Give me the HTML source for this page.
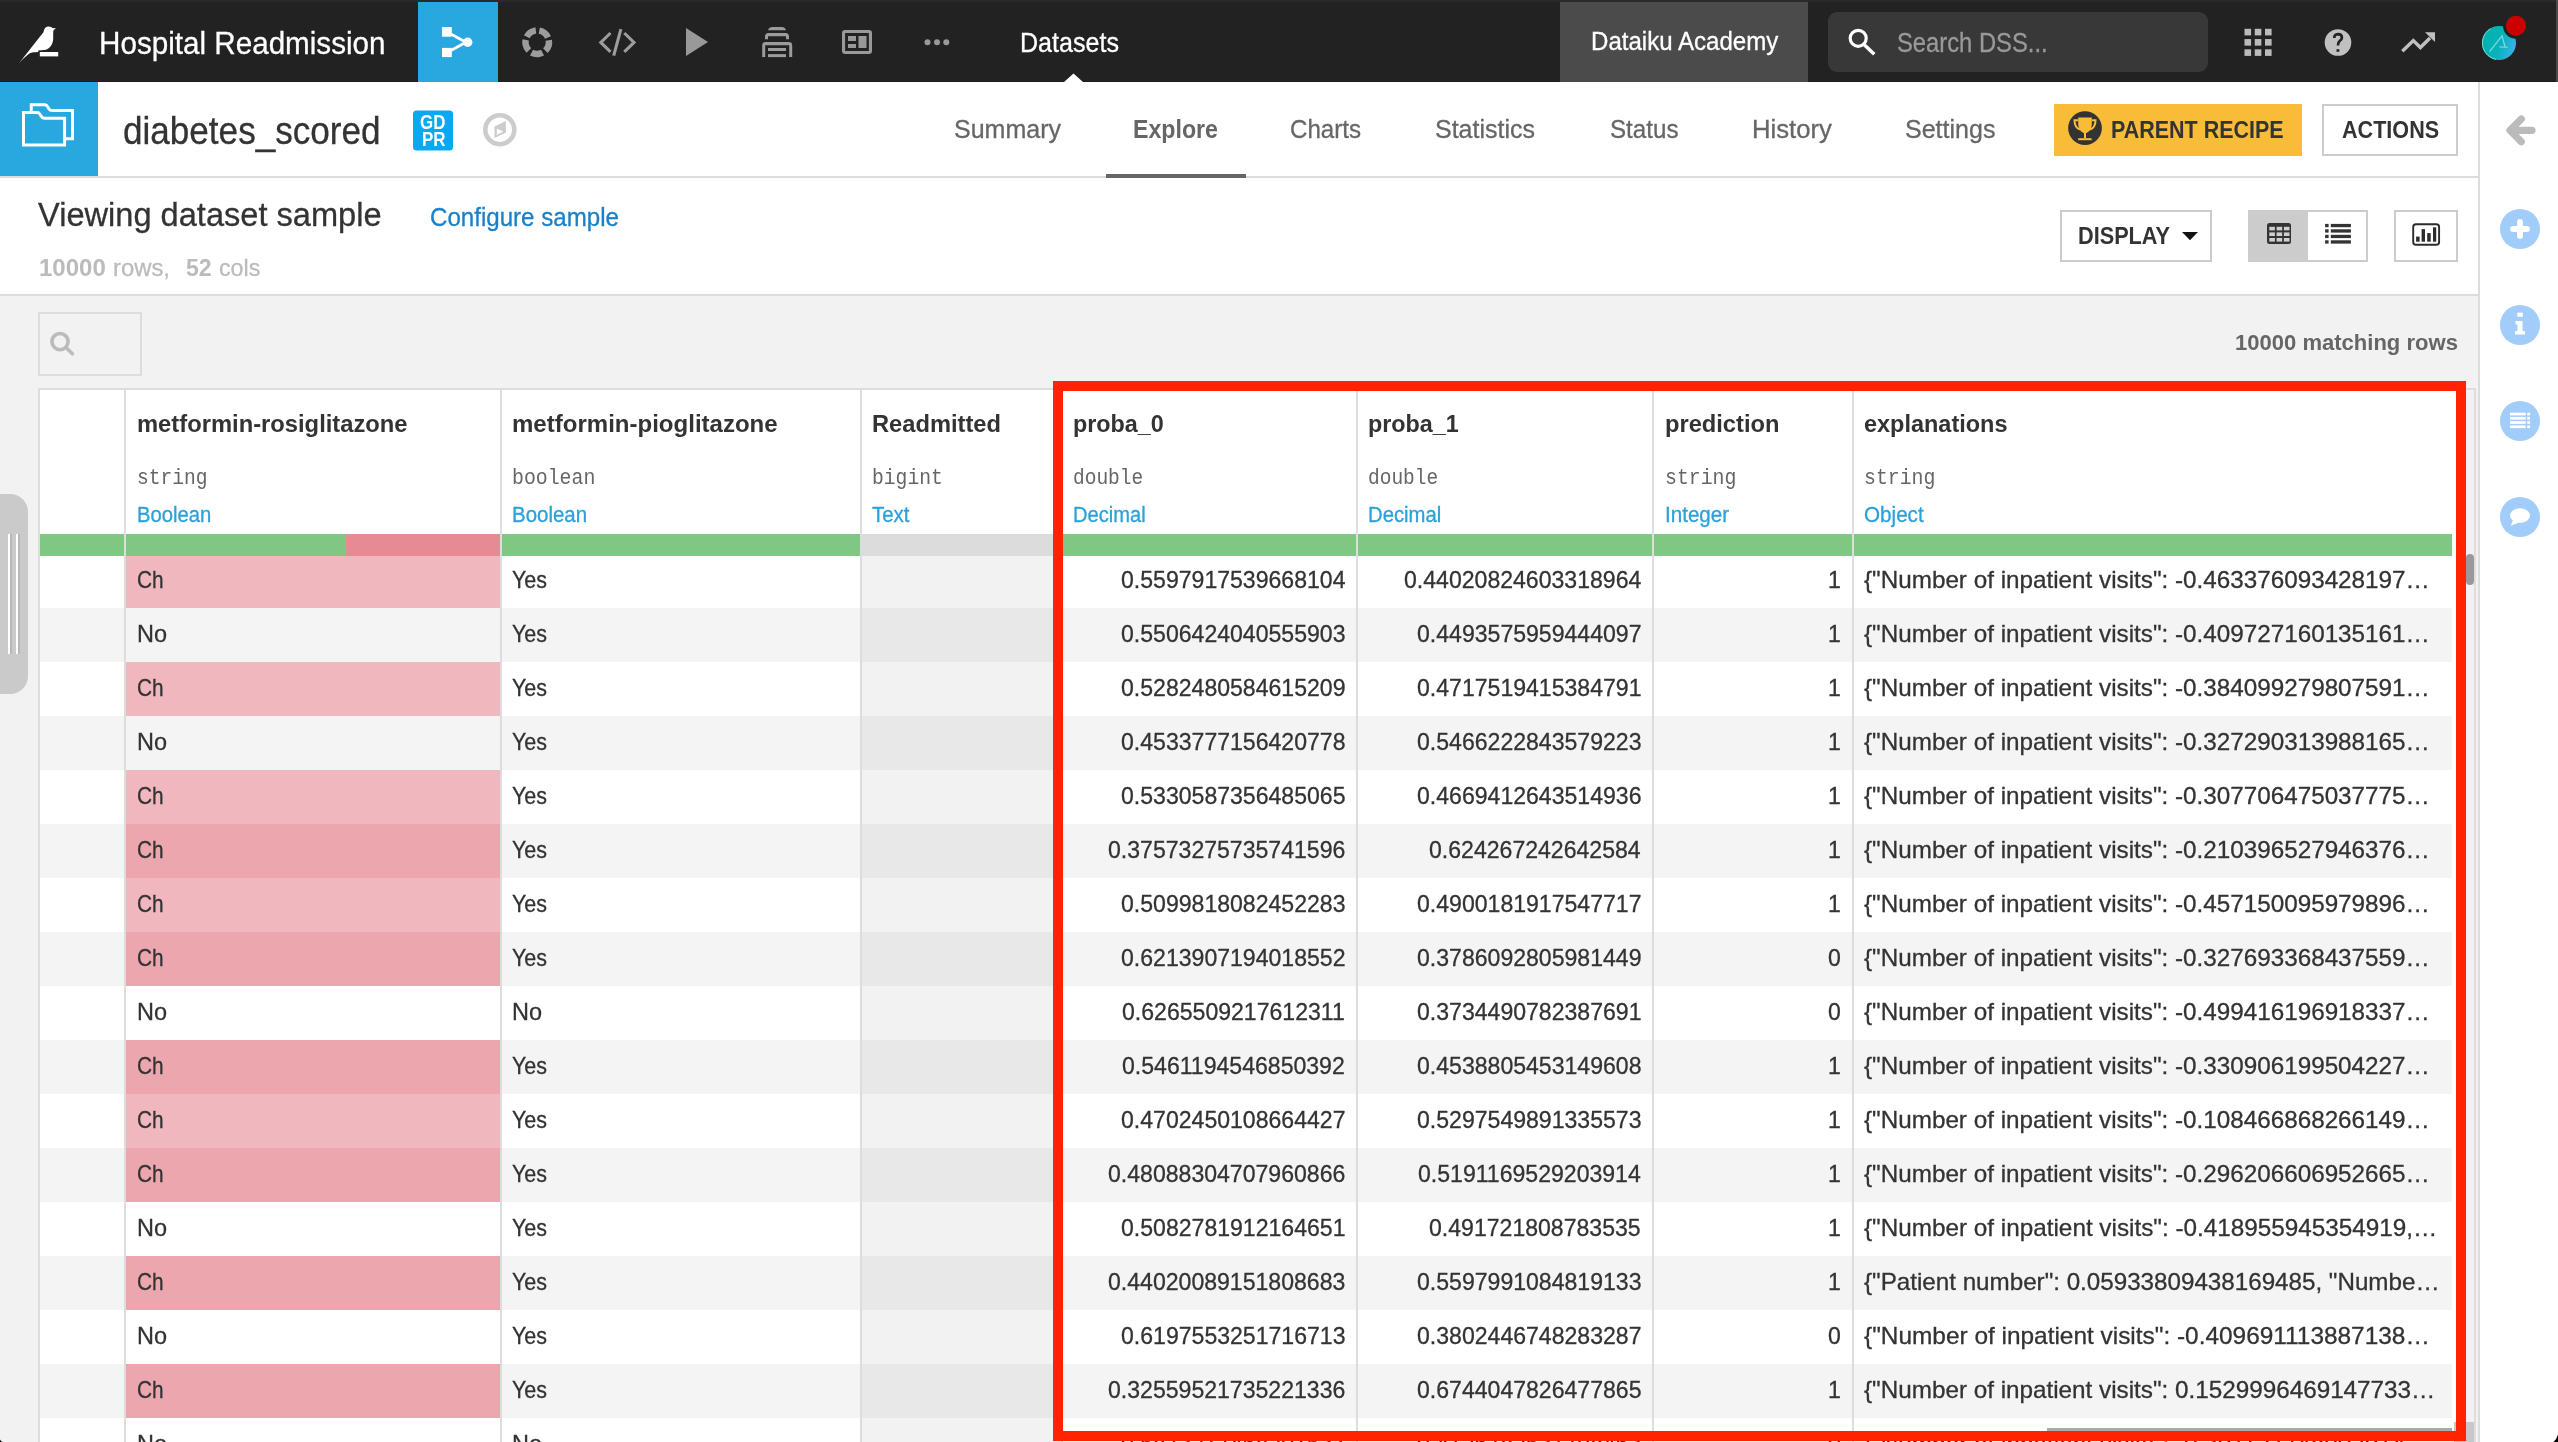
<!DOCTYPE html>
<html><head><meta charset="utf-8"><title>diabetes_scored - Explore</title>
<style>
html,body{margin:0;padding:0;}
body{width:2558px;height:1442px;overflow:hidden;position:relative;background:#fff;font-family:"Liberation Sans", sans-serif;}
#pg div{position:absolute;box-sizing:content-box;}
#pg .t{position:absolute;white-space:nowrap;}
#pg .r{-webkit-text-stroke:0.3px currentColor;}
#pg{position:absolute;left:0;top:0;width:2558px;height:1442px;will-change:transform;}
</style></head><body><div id="pg">
<div style="left:0px;top:0px;width:2558px;height:82px;background:#222;"></div>
<div style="left:0px;top:0px;width:2558px;height:2px;background:#2a2a2a;"></div>
<div style="left:0px;top:81px;width:2558px;height:1px;background:#1d1d1d;"></div>
<div style="left:2556px;top:0px;width:2px;height:82px;background:#4a4a4a;"></div>
<div style="left:418px;top:2px;width:80px;height:80px;background:#28a8de;"></div>
<div style="left:1560px;top:2px;width:248px;height:80px;background:#4b4b4b;"></div>
<div style="left:1828px;top:12px;width:380px;height:60px;background:#383838;border-radius:9px"></div>
<div style="left:0px;top:82px;width:2478px;height:94px;background:#fff;"></div>
<div style="left:0px;top:82px;width:98px;height:94px;background:#28a8de;"></div>
<div style="left:0px;top:176px;width:2478px;height:2px;background:#ddd;"></div>
<div style="left:1106px;top:174px;width:140px;height:4px;background:#666;"></div>
<div style="left:2480px;top:82px;width:78px;height:1360px;background:#fff;"></div>
<div style="left:2478px;top:82px;width:2px;height:1360px;background:#ddd;"></div>
<div style="left:0px;top:178px;width:2478px;height:116px;background:#fff;"></div>
<div style="left:0px;top:294px;width:2478px;height:2px;background:#ddd;"></div>
<div style="left:0px;top:296px;width:2478px;height:1146px;background:#f2f2f2;"></div>
<div style="left:2054px;top:104px;width:248px;height:52px;background:#f8bc38;"></div>
<div style="left:2322px;top:104px;width:132px;height:48px;border:2px solid #ccc;background:#fff"></div>
<div style="left:2060px;top:210px;width:148px;height:48px;border:2px solid #ccc;background:#fff"></div>
<div style="left:2248px;top:210px;width:116px;height:48px;border:2px solid #ccc;background:#fff"></div>
<div style="left:2248px;top:210px;width:60px;height:52px;background:#ccc;"></div>
<div style="left:2394px;top:210px;width:60px;height:48px;border:2px solid #ccc;background:#fff"></div>
<div style="left:38px;top:312px;width:100px;height:60px;border:2px solid #ddd;background:#f2f2f2"></div>
<div style="left:0px;top:494px;width:28px;height:200px;background:#cacaca;border-radius:0 18px 18px 0"></div>
<div style="left:8px;top:534px;width:2px;height:120px;background:#fff;"></div>
<div style="left:10px;top:534px;width:2px;height:120px;background:#b8b8b8;"></div>
<div style="left:16px;top:534px;width:2px;height:120px;background:#fff;"></div>
<div style="left:18px;top:534px;width:2px;height:120px;background:#b8b8b8;"></div>
<div style="left:38px;top:388px;width:2438px;height:1054px;background:#ddd;"></div>
<div style="left:40px;top:390px;width:2434px;height:1052px;background:#fff;"></div>
<div style="left:2458px;top:390px;width:16px;height:1052px;background:#f1f1f1;"></div>
<div style="left:2466px;top:554px;width:8px;height:31px;background:#999;border-radius:4px"></div>
<div style="left:40px;top:534px;width:84px;height:22px;background:#81c784;"></div>
<div style="left:126px;top:534px;width:374px;height:22px;background:#81c784;"></div>
<div style="left:502px;top:534px;width:358px;height:22px;background:#81c784;"></div>
<div style="left:862px;top:534px;width:199px;height:22px;background:#dcdcdc;"></div>
<div style="left:1063px;top:534px;width:293px;height:22px;background:#81c784;"></div>
<div style="left:1358px;top:534px;width:294px;height:22px;background:#81c784;"></div>
<div style="left:1654px;top:534px;width:198px;height:22px;background:#81c784;"></div>
<div style="left:1854px;top:534px;width:598px;height:22px;background:#81c784;"></div>
<div style="left:346px;top:534px;width:154px;height:22px;background:#e68a93;"></div>
<div style="left:40px;top:556px;width:2412px;height:52px;background:#fff;"></div>
<div style="left:862px;top:556px;width:199px;height:52px;background:#f2f2f2;"></div>
<div style="left:126px;top:556px;width:374px;height:52px;background:#f0b7bf;"></div>
<div style="left:40px;top:608px;width:2412px;height:54px;background:#f4f4f4;"></div>
<div style="left:862px;top:608px;width:199px;height:54px;background:#e8e8e8;"></div>
<div style="left:40px;top:662px;width:2412px;height:54px;background:#fff;"></div>
<div style="left:862px;top:662px;width:199px;height:54px;background:#f2f2f2;"></div>
<div style="left:126px;top:662px;width:374px;height:54px;background:#f0b7bf;"></div>
<div style="left:40px;top:716px;width:2412px;height:54px;background:#f4f4f4;"></div>
<div style="left:862px;top:716px;width:199px;height:54px;background:#e8e8e8;"></div>
<div style="left:40px;top:770px;width:2412px;height:54px;background:#fff;"></div>
<div style="left:862px;top:770px;width:199px;height:54px;background:#f2f2f2;"></div>
<div style="left:126px;top:770px;width:374px;height:54px;background:#f0b7bf;"></div>
<div style="left:40px;top:824px;width:2412px;height:54px;background:#f4f4f4;"></div>
<div style="left:862px;top:824px;width:199px;height:54px;background:#e8e8e8;"></div>
<div style="left:126px;top:824px;width:374px;height:54px;background:#eca6ae;"></div>
<div style="left:40px;top:878px;width:2412px;height:54px;background:#fff;"></div>
<div style="left:862px;top:878px;width:199px;height:54px;background:#f2f2f2;"></div>
<div style="left:126px;top:878px;width:374px;height:54px;background:#f0b7bf;"></div>
<div style="left:40px;top:932px;width:2412px;height:54px;background:#f4f4f4;"></div>
<div style="left:862px;top:932px;width:199px;height:54px;background:#e8e8e8;"></div>
<div style="left:126px;top:932px;width:374px;height:54px;background:#eca6ae;"></div>
<div style="left:40px;top:986px;width:2412px;height:54px;background:#fff;"></div>
<div style="left:862px;top:986px;width:199px;height:54px;background:#f2f2f2;"></div>
<div style="left:40px;top:1040px;width:2412px;height:54px;background:#f4f4f4;"></div>
<div style="left:862px;top:1040px;width:199px;height:54px;background:#e8e8e8;"></div>
<div style="left:126px;top:1040px;width:374px;height:54px;background:#eca6ae;"></div>
<div style="left:40px;top:1094px;width:2412px;height:54px;background:#fff;"></div>
<div style="left:862px;top:1094px;width:199px;height:54px;background:#f2f2f2;"></div>
<div style="left:126px;top:1094px;width:374px;height:54px;background:#f0b7bf;"></div>
<div style="left:40px;top:1148px;width:2412px;height:54px;background:#f4f4f4;"></div>
<div style="left:862px;top:1148px;width:199px;height:54px;background:#e8e8e8;"></div>
<div style="left:126px;top:1148px;width:374px;height:54px;background:#eca6ae;"></div>
<div style="left:40px;top:1202px;width:2412px;height:54px;background:#fff;"></div>
<div style="left:862px;top:1202px;width:199px;height:54px;background:#f2f2f2;"></div>
<div style="left:40px;top:1256px;width:2412px;height:54px;background:#f4f4f4;"></div>
<div style="left:862px;top:1256px;width:199px;height:54px;background:#e8e8e8;"></div>
<div style="left:126px;top:1256px;width:374px;height:54px;background:#eca6ae;"></div>
<div style="left:40px;top:1310px;width:2412px;height:54px;background:#fff;"></div>
<div style="left:862px;top:1310px;width:199px;height:54px;background:#f2f2f2;"></div>
<div style="left:40px;top:1364px;width:2412px;height:54px;background:#f4f4f4;"></div>
<div style="left:862px;top:1364px;width:199px;height:54px;background:#e8e8e8;"></div>
<div style="left:126px;top:1364px;width:374px;height:54px;background:#eca6ae;"></div>
<div style="left:40px;top:1418px;width:2412px;height:24px;background:#fff;"></div>
<div style="left:862px;top:1418px;width:199px;height:24px;background:#f2f2f2;"></div>
<div style="left:124px;top:390px;width:2px;height:1052px;background:#ddd;"></div>
<div style="left:500px;top:390px;width:2px;height:1052px;background:#ddd;"></div>
<div style="left:860px;top:390px;width:2px;height:1052px;background:#ddd;"></div>
<div style="left:1061px;top:390px;width:2px;height:1052px;background:#ddd;"></div>
<div style="left:1356px;top:390px;width:2px;height:1052px;background:#ddd;"></div>
<div style="left:1652px;top:390px;width:2px;height:1052px;background:#ddd;"></div>
<div style="left:1852px;top:390px;width:2px;height:1052px;background:#ddd;"></div>
<div style="left:2474px;top:390px;width:2px;height:1052px;background:#ddd;"></div>
<div style="left:2047px;top:1428px;width:405px;height:3px;background:#aaa;"></div>
<div style="left:2454px;top:1422px;width:20px;height:20px;background:#c8c8c8;"></div>
<svg style="position:absolute;left:0;top:0" width="2558" height="1442" viewBox="0 0 2558 1442"><path d="M18 64.4 L43.6 32.1 C43.8 28.5 46 26.4 48.5 26.4 C50.5 26.4 52 27.2 53 28.3 L55.9 28.1 L53.4 30.6 C53 33 53.3 36 53.2 39 C53 43 51.5 46 49 48 C47.5 49.3 46 49.8 44 50 L38.4 50.5 L38.1 51.9 C34 52.1 31.5 52.3 30.3 53.1 C26.5 55.5 21 61 18 64.4 Z" fill="#fff"/><rect x="39.8" y="52" width="18.4" height="4.4" fill="#fff"/><g fill="#fff"><rect x="442" y="27" width="9.8" height="9.7"/><rect x="442" y="47.9" width="9.8" height="9.2"/><circle cx="467.7" cy="42.2" r="4.7"/><path d="M449 33 L466 42.2 L449 51.5" fill="none" stroke="#fff" stroke-width="2.8"/></g><circle cx="537.2" cy="42.2" r="11.75" fill="none" stroke="#9c9c9c" stroke-width="6.5" stroke-dasharray="11.37 3.4" transform="rotate(-9.7 537.2 42.2)"/><g fill="none" stroke="#9c9c9c" stroke-width="3.1"><path d="M610.5 33 L600.8 42.4 L610.5 51.8"/><path d="M624.3 33 L634 42.4 L624.3 51.8"/><path d="M620.9 29.1 L613.7 55.6"/></g><path d="M686 28 L708 42 L686 56 Z" fill="#999"/><g fill="#9c9c9c"><path d="M768 30.3 Q769 27 772.5 27 L781.5 27 Q785 27 786 30.3 Z"/><path d="M765 39.3 L765 36.5 Q765 33 768.5 33 L785.5 33 Q789 33 789 36.5 L789 39.3 L786 39.3 L786 36.2 L768 36.2 L768 39.3 Z"/><path d="M762.2 57.1 L762.2 45.5 Q762.2 42.1 765.6 42.1 L788.8 42.1 Q792.2 42.1 792.2 45.5 L792.2 57.1 L789.2 57.1 L789.2 45.2 L765.2 45.2 L765.2 57.1 Z"/><rect x="768" y="48" width="18" height="3"/><rect x="768" y="54.1" width="18" height="3"/></g><g fill="#999"><path fill-rule="evenodd" d="M845 30 L869 30 Q872 30 872 33 L872 51 Q872 54 869 54 L845 54 Q842 54 842 51 L842 33 Q842 30 845 30 Z M845.1 33.1 L845.1 50.9 L868.9 50.9 L868.9 33.1 Z"/><rect x="848" y="36" width="8" height="5"/><rect x="848" y="44" width="8" height="4"/><rect x="858.5" y="36" width="8" height="12"/></g><g fill="#999"><circle cx="927.5" cy="42.3" r="3"/><circle cx="937" cy="42.3" r="3"/><circle cx="946.3" cy="42.3" r="3"/></g><path d="M1064 82 L1073.5 73.5 L1083 82 Z" fill="#fff"/><g fill="none" stroke="#fff" stroke-width="3.2"><circle cx="1858.2" cy="38.3" r="8"/><path d="M1864 44.5 L1874.3 54.3" stroke-width="3.5"/></g><rect x="2244.50" y="28.80" width="6.6" height="6.6" fill="#bbb"/><rect x="2244.50" y="39.05" width="6.6" height="6.6" fill="#bbb"/><rect x="2244.50" y="49.30" width="6.6" height="6.6" fill="#bbb"/><rect x="2254.75" y="28.80" width="6.6" height="6.6" fill="#bbb"/><rect x="2254.75" y="39.05" width="6.6" height="6.6" fill="#bbb"/><rect x="2254.75" y="49.30" width="6.6" height="6.6" fill="#bbb"/><rect x="2265.00" y="28.80" width="6.6" height="6.6" fill="#bbb"/><rect x="2265.00" y="39.05" width="6.6" height="6.6" fill="#bbb"/><rect x="2265.00" y="49.30" width="6.6" height="6.6" fill="#bbb"/><circle cx="2338" cy="42.5" r="13.3" fill="#c0c0c0"/><path d="M2334.3 38 Q2334.1 34.2 2338 34.1 Q2341.9 34.2 2341.9 37.4 Q2341.9 39.6 2339.8 40.9 Q2338 42.2 2338 45.6" fill="none" stroke="#222" stroke-width="2.7"/><rect x="2336.5" y="49.2" width="2.8" height="2.6" fill="#222"/><path d="M2402.3 51.3 L2413.3 40.6 L2420.4 47.5 L2430 38" fill="none" stroke="#c0c0c0" stroke-width="3.4"/><path d="M2425 32.2 L2435 32.2 L2435 42 Z" fill="#c0c0c0"/><defs><linearGradient id="av" x1="0" y1="0.3" x2="1" y2="0.6"><stop offset="0" stop-color="#00b2ad"/><stop offset="0.55" stop-color="#08b2b9"/><stop offset="1" stop-color="#3ab2ea"/></linearGradient></defs><circle cx="2499" cy="43" r="17" fill="url(#av)"/><path d="M2489.6 51.7 L2502 35.8 L2505 46.5 M2499.5 46.8 L2507.5 47.4" stroke="#7fd6e0" stroke-width="1.3" fill="none"/><circle cx="2499" cy="43" r="16.6" fill="none" stroke="#8fe3ef" stroke-width="0.8" stroke-dasharray="40 200" transform="rotate(100 2499 43)"/><circle cx="2516" cy="25.8" r="11.5" fill="#cc0000" stroke="#222" stroke-width="3"/><g fill="none" stroke="#fff" stroke-width="3"><path d="M31.3 111.5 L31.3 104.8 L44.5 104.8 Q46.5 104.8 47.5 106.5 L49 109 Q50 110.6 52 110.6 L72.5 110.6 L72.5 138.8 L65 138.8"/><path d="M23.5 145 L23.5 112.6 L37 112.6 Q39 112.6 40 114.3 L41.5 116.6 Q42.5 118.2 44.5 118.2 L64.6 118.2 L64.6 145 Z"/></g><rect x="413" y="110.5" width="40" height="40" rx="3.5" fill="#08a9f2"/><circle cx="499.8" cy="129.7" r="14.5" fill="none" stroke="#ccc" stroke-width="4.6"/><path fill-rule="evenodd" d="M494.5 126.4 L505.7 121.1 L506 132.5 L494.5 138.1 Z M496.8 128.5 L503.2 131.5 L496.8 135 Z" fill="#ccc"/><circle cx="2085" cy="128.1" r="16.9" fill="#333"/><g fill="#f8bc38"><path d="M2078.2 117.6 L2091.8 117.6 L2091.8 124.5 Q2091.5 131 2086 133.2 L2086 138 L2084 138 L2084 133.2 Q2078.5 131 2078.2 124.5 Z"/><rect x="2078.2" y="138.2" width="13.4" height="2"/></g><g fill="none" stroke="#f8bc38" stroke-width="2"><path d="M2078.2 120.2 L2074.5 120.2 Q2074.5 127.5 2080 129.5"/><path d="M2091.8 120.2 L2095.5 120.2 Q2095.5 127.5 2090 129.5"/></g><path d="M2182 232 L2198 232 L2190 240.2 Z" fill="#111"/><rect x="2267" y="223" width="24" height="21" rx="2.5" fill="#333"/><rect x="2269.30" y="226.80" width="5.6" height="3.6" fill="#cfcfcf"/><rect x="2269.30" y="232.40" width="5.6" height="3.6" fill="#cfcfcf"/><rect x="2269.30" y="238.00" width="5.6" height="3.6" fill="#cfcfcf"/><rect x="2276.60" y="226.80" width="5.6" height="3.6" fill="#cfcfcf"/><rect x="2276.60" y="232.40" width="5.6" height="3.6" fill="#cfcfcf"/><rect x="2276.60" y="238.00" width="5.6" height="3.6" fill="#cfcfcf"/><rect x="2283.90" y="226.80" width="5.6" height="3.6" fill="#cfcfcf"/><rect x="2283.90" y="232.40" width="5.6" height="3.6" fill="#cfcfcf"/><rect x="2283.90" y="238.00" width="5.6" height="3.6" fill="#cfcfcf"/><rect x="2325.1" y="223.9" width="3.5" height="3.3" fill="#333"/><rect x="2330.8" y="223.9" width="20.1" height="3.3" fill="#333"/><rect x="2325.1" y="229.3" width="3.5" height="3.3" fill="#333"/><rect x="2330.8" y="229.3" width="20.1" height="3.3" fill="#333"/><rect x="2325.1" y="234.8" width="3.5" height="3.3" fill="#333"/><rect x="2330.8" y="234.8" width="20.1" height="3.3" fill="#333"/><rect x="2325.1" y="240.3" width="3.5" height="3.3" fill="#333"/><rect x="2330.8" y="240.3" width="20.1" height="3.3" fill="#333"/><rect x="2413.2" y="224.2" width="25.9" height="20.6" rx="2.8" fill="none" stroke="#2c2c2c" stroke-width="1.9"/><g fill="#2c2c2c"><rect x="2416.1" y="236.6" width="3.5" height="5.1"/><rect x="2421.6" y="229.1" width="3.4" height="12.6"/><rect x="2427.2" y="233.1" width="3.5" height="8.6"/><rect x="2433" y="227.3" width="3.2" height="14.4"/></g><g fill="none" stroke="#bbb" stroke-width="3.6"><circle cx="60" cy="341.6" r="8.1"/><path d="M66.2 347.8 L72.4 353.8" stroke-linecap="round"/></g><path d="M2532 130.3 L2512 130.3 M2521.3 119 L2510 130.3 L2521.3 141.8" fill="none" stroke="#bbb" stroke-width="7.2" stroke-linecap="round" stroke-linejoin="round"/><circle cx="2520" cy="229" r="20" fill="#a2cdfa"/><circle cx="2520" cy="325" r="20" fill="#a2cdfa"/><circle cx="2520" cy="421" r="20" fill="#a2cdfa"/><circle cx="2520" cy="517" r="20" fill="#a2cdfa"/><path d="M2520 222 L2520 236 M2513 229 L2527 229" stroke="#fff" stroke-width="5.8" stroke-linecap="round"/><rect x="2517.3" y="312.6" width="5.6" height="4.2" rx="0.6" fill="#fff"/><path d="M2515.5 321 L2522.5 321 L2522.5 331 L2525 331 L2525 334.5 L2515 334.5 L2515 331 L2517.5 331 L2517.5 324.5 L2515.5 324.5 Z" fill="#fff"/><rect x="2510" y="412.70" width="15.7" height="2.7" fill="#fff"/><rect x="2527.2" y="412.70" width="2.9" height="2.7" fill="#fff"/><rect x="2510" y="416.93" width="15.7" height="2.7" fill="#fff"/><rect x="2527.2" y="416.93" width="2.9" height="2.7" fill="#fff"/><rect x="2510" y="421.16" width="15.7" height="2.7" fill="#fff"/><rect x="2527.2" y="421.16" width="2.9" height="2.7" fill="#fff"/><rect x="2510" y="425.39" width="15.7" height="2.7" fill="#fff"/><rect x="2527.2" y="425.39" width="2.9" height="2.7" fill="#fff"/><ellipse cx="2520" cy="515.6" rx="10" ry="7.3" fill="#fff"/><path d="M2513 520 L2510.8 525.8 L2519 522.5 Z" fill="#fff"/><path d="M2558 1434.5 L2558 1442 L2553.5 1442 Q2556.8 1439 2558 1434.5 Z" fill="#000"/><path d="M0 1439.5 L0 1442 L2.5 1442 Q0.8 1441 0 1439.5 Z" fill="#000"/></svg>
<span class="t r" style="left:99.00px;top:27.00px;font:normal 32.00px/32.00px 'Liberation Sans', sans-serif;color:#fff;letter-spacing:0.000px;transform:scaleX(0.9259);transform-origin:0 0;">Hospital Readmission</span>
<span class="t r" style="left:1020.00px;top:29.00px;font:normal 27.60px/27.60px 'Liberation Sans', sans-serif;color:#fff;letter-spacing:0.000px;transform:scaleX(0.9087);transform-origin:0 0;">Datasets</span>
<span class="t r" style="left:1590.60px;top:28.00px;font:normal 26.20px/26.20px 'Liberation Sans', sans-serif;color:#fff;letter-spacing:0.000px;transform:scaleX(0.9191);transform-origin:0 0;">Dataiku Academy</span>
<span class="t r" style="left:1897.00px;top:30.00px;font:normal 27.00px/27.00px 'Liberation Sans', sans-serif;color:#999;letter-spacing:0.000px;transform:scaleX(0.8805);transform-origin:0 0;">Search DSS...</span>
<span class="t r" style="left:123.00px;top:112.00px;font:normal 38.50px/38.50px 'Liberation Sans', sans-serif;color:#333;letter-spacing:0.000px;transform:scaleX(0.9115);transform-origin:0 0;">diabetes_scored</span>
<span class="t r" style="left:953.75px;top:117.00px;font:normal 25.80px/25.80px 'Liberation Sans', sans-serif;color:#666;letter-spacing:0.000px;transform:scaleX(0.9696);transform-origin:0 0;">Summary</span>
<span class="t" style="left:1133.00px;top:117.00px;font:bold 25.80px/25.80px 'Liberation Sans', sans-serif;color:#666;letter-spacing:0.000px;transform:scaleX(0.8983);transform-origin:0 0;">Explore</span>
<span class="t r" style="left:1290.00px;top:117.00px;font:normal 25.80px/25.80px 'Liberation Sans', sans-serif;color:#666;letter-spacing:0.000px;transform:scaleX(0.9344);transform-origin:0 0;">Charts</span>
<span class="t r" style="left:1435.00px;top:117.00px;font:normal 25.80px/25.80px 'Liberation Sans', sans-serif;color:#666;letter-spacing:0.000px;transform:scaleX(0.9690);transform-origin:0 0;">Statistics</span>
<span class="t r" style="left:1610.00px;top:117.00px;font:normal 25.80px/25.80px 'Liberation Sans', sans-serif;color:#666;letter-spacing:0.000px;transform:scaleX(0.9365);transform-origin:0 0;">Status</span>
<span class="t r" style="left:1751.70px;top:117.00px;font:normal 25.80px/25.80px 'Liberation Sans', sans-serif;color:#666;letter-spacing:0.000px;transform:scaleX(0.9962);transform-origin:0 0;">History</span>
<span class="t r" style="left:1904.80px;top:117.00px;font:normal 25.80px/25.80px 'Liberation Sans', sans-serif;color:#666;letter-spacing:0.000px;transform:scaleX(0.9699);transform-origin:0 0;">Settings</span>
<span class="t" style="left:2111.00px;top:118.00px;font:bold 24.70px/24.70px 'Liberation Sans', sans-serif;color:#333;letter-spacing:0.000px;transform:scaleX(0.8699);transform-origin:0 0;">PARENT RECIPE</span>
<span class="t" style="left:2341.80px;top:118.00px;font:bold 24.70px/24.70px 'Liberation Sans', sans-serif;color:#333;letter-spacing:0.000px;transform:scaleX(0.8745);transform-origin:0 0;">ACTIONS</span>
<span class="t r" style="left:38.00px;top:198.00px;font:normal 33.40px/33.40px 'Liberation Sans', sans-serif;color:#333;letter-spacing:0.000px;transform:scaleX(0.9760);transform-origin:0 0;">Viewing dataset sample</span>
<span class="t r" style="left:430.00px;top:205.00px;font:normal 25.70px/25.70px 'Liberation Sans', sans-serif;color:#1a80c8;letter-spacing:0.000px;transform:scaleX(0.9383);transform-origin:0 0;">Configure sample</span>
<span class="t" style="left:39.00px;top:256.00px;font:bold 24.30px/24.30px 'Liberation Sans', sans-serif;color:#bbb;letter-spacing:0.000px;transform:scaleX(0.9881);transform-origin:0 0;">10000</span>
<span class="t r" style="left:113.00px;top:256.00px;font:normal 24.30px/24.30px 'Liberation Sans', sans-serif;color:#bbb;letter-spacing:0.000px;transform:scaleX(0.9815);transform-origin:0 0;">rows,</span>
<span class="t" style="left:186.25px;top:256.00px;font:bold 24.30px/24.30px 'Liberation Sans', sans-serif;color:#bbb;letter-spacing:0.000px;transform:scaleX(0.9525);transform-origin:0 0;">52</span>
<span class="t r" style="left:219.25px;top:256.00px;font:normal 24.30px/24.30px 'Liberation Sans', sans-serif;color:#bbb;letter-spacing:0.000px;transform:scaleX(0.9550);transform-origin:0 0;">cols</span>
<span class="t" style="left:2078.00px;top:224.00px;font:bold 24.70px/24.70px 'Liberation Sans', sans-serif;color:#333;letter-spacing:0.000px;transform:scaleX(0.8779);transform-origin:0 0;">DISPLAY</span>
<span class="t" style="left:2234.50px;top:332.00px;font:bold 22.20px/22.20px 'Liberation Sans', sans-serif;color:#666;letter-spacing:0.000px;transform:scaleX(0.9931);transform-origin:0 0;">10000 matching rows</span>
<span class="t" style="left:137.00px;top:412.00px;font:bold 24.80px/24.80px 'Liberation Sans', sans-serif;color:#333;letter-spacing:0.000px;transform:scaleX(0.9580);transform-origin:0 0;">metformin-rosiglitazone</span>
<span class="t" style="left:137.00px;top:468.00px;font:normal 21.50px/21.50px 'Liberation Mono', monospace;color:#666;letter-spacing:0.000px;transform:scaleX(0.9109);transform-origin:0 0;">string</span>
<span class="t r" style="left:137.00px;top:504.00px;font:normal 21.20px/21.20px 'Liberation Sans', sans-serif;color:#2aa1da;letter-spacing:0.000px;transform:scaleX(0.9562);transform-origin:0 0;">Boolean</span>
<span class="t" style="left:512.30px;top:412.00px;font:bold 24.80px/24.80px 'Liberation Sans', sans-serif;color:#333;letter-spacing:0.000px;transform:scaleX(0.9691);transform-origin:0 0;">metformin-pioglitazone</span>
<span class="t" style="left:512.30px;top:468.00px;font:normal 21.50px/21.50px 'Liberation Mono', monospace;color:#666;letter-spacing:0.000px;transform:scaleX(0.9225);transform-origin:0 0;">boolean</span>
<span class="t r" style="left:512.30px;top:504.00px;font:normal 21.20px/21.20px 'Liberation Sans', sans-serif;color:#2aa1da;letter-spacing:0.000px;transform:scaleX(0.9652);transform-origin:0 0;">Boolean</span>
<span class="t" style="left:872.40px;top:412.00px;font:bold 24.80px/24.80px 'Liberation Sans', sans-serif;color:#333;letter-spacing:0.000px;transform:scaleX(0.9553);transform-origin:0 0;">Readmitted</span>
<span class="t" style="left:872.40px;top:468.00px;font:normal 21.50px/21.50px 'Liberation Mono', monospace;color:#666;letter-spacing:0.000px;transform:scaleX(0.9147);transform-origin:0 0;">bigint</span>
<span class="t r" style="left:872.40px;top:504.00px;font:normal 21.20px/21.20px 'Liberation Sans', sans-serif;color:#2aa1da;letter-spacing:0.000px;transform:scaleX(0.9640);transform-origin:0 0;">Text</span>
<span class="t" style="left:1073.00px;top:412.00px;font:bold 24.80px/24.80px 'Liberation Sans', sans-serif;color:#333;letter-spacing:0.000px;transform:scaleX(0.9412);transform-origin:0 0;">proba_0</span>
<span class="t" style="left:1073.00px;top:468.00px;font:normal 21.50px/21.50px 'Liberation Mono', monospace;color:#666;letter-spacing:0.000px;transform:scaleX(0.9070);transform-origin:0 0;">double</span>
<span class="t r" style="left:1073.00px;top:504.00px;font:normal 21.20px/21.20px 'Liberation Sans', sans-serif;color:#2aa1da;letter-spacing:0.000px;transform:scaleX(0.9506);transform-origin:0 0;">Decimal</span>
<span class="t" style="left:1368.40px;top:412.00px;font:bold 24.80px/24.80px 'Liberation Sans', sans-serif;color:#333;letter-spacing:0.000px;transform:scaleX(0.9412);transform-origin:0 0;">proba_1</span>
<span class="t" style="left:1368.40px;top:468.00px;font:normal 21.50px/21.50px 'Liberation Mono', monospace;color:#666;letter-spacing:0.000px;transform:scaleX(0.9070);transform-origin:0 0;">double</span>
<span class="t r" style="left:1368.40px;top:504.00px;font:normal 21.20px/21.20px 'Liberation Sans', sans-serif;color:#2aa1da;letter-spacing:0.000px;transform:scaleX(0.9571);transform-origin:0 0;">Decimal</span>
<span class="t" style="left:1664.60px;top:412.00px;font:bold 24.80px/24.80px 'Liberation Sans', sans-serif;color:#333;letter-spacing:0.000px;transform:scaleX(0.9546);transform-origin:0 0;">prediction</span>
<span class="t" style="left:1664.60px;top:468.00px;font:normal 21.50px/21.50px 'Liberation Mono', monospace;color:#666;letter-spacing:0.000px;transform:scaleX(0.9225);transform-origin:0 0;">string</span>
<span class="t r" style="left:1664.60px;top:504.00px;font:normal 21.20px/21.20px 'Liberation Sans', sans-serif;color:#2aa1da;letter-spacing:0.000px;transform:scaleX(0.9714);transform-origin:0 0;">Integer</span>
<span class="t" style="left:1864.30px;top:412.00px;font:bold 24.80px/24.80px 'Liberation Sans', sans-serif;color:#333;letter-spacing:0.000px;transform:scaleX(0.9466);transform-origin:0 0;">explanations</span>
<span class="t" style="left:1864.30px;top:468.00px;font:normal 21.50px/21.50px 'Liberation Mono', monospace;color:#666;letter-spacing:0.000px;transform:scaleX(0.9225);transform-origin:0 0;">string</span>
<span class="t r" style="left:1864.30px;top:504.00px;font:normal 21.20px/21.20px 'Liberation Sans', sans-serif;color:#2aa1da;letter-spacing:0.000px;transform:scaleX(0.9744);transform-origin:0 0;">Object</span>
<span class="t r" style="left:137.00px;top:568.00px;font:normal 24.00px/24.00px 'Liberation Sans', sans-serif;color:#333;letter-spacing:0.000px;transform:scaleX(0.8676);transform-origin:0 0;">Ch</span>
<span class="t r" style="left:512.00px;top:568.00px;font:normal 24.00px/24.00px 'Liberation Sans', sans-serif;color:#333;letter-spacing:0.000px;transform:scaleX(0.8933);transform-origin:0 0;">Yes</span>
<span class="t r" style="left:1120.50px;top:568.00px;font:normal 24.00px/24.00px 'Liberation Sans', sans-serif;color:#333;letter-spacing:0.000px;transform:scaleX(0.9611);transform-origin:0 0;">0.5597917539668104</span>
<span class="t r" style="left:1403.64px;top:568.00px;font:normal 24.00px/24.00px 'Liberation Sans', sans-serif;color:#333;letter-spacing:0.000px;transform:scaleX(0.9611);transform-origin:0 0;">0.44020824603318964</span>
<span class="t r" style="left:1827.50px;top:568.00px;font:normal 24.00px/24.00px 'Liberation Sans', sans-serif;color:#333;letter-spacing:0.000px;transform:scaleX(0.9611);transform-origin:0 0;">1</span>
<span class="t r" style="left:1864.00px;top:568.00px;font:normal 24.00px/24.00px 'Liberation Sans', sans-serif;color:#333;letter-spacing:0.000px;transform:scaleX(1.0102);transform-origin:0 0;">{"Number of inpatient visits": -0.463376093428197…</span>
<span class="t r" style="left:137.00px;top:622.00px;font:normal 24.00px/24.00px 'Liberation Sans', sans-serif;color:#333;letter-spacing:0.000px;transform:scaleX(0.9785);transform-origin:0 0;">No</span>
<span class="t r" style="left:512.00px;top:622.00px;font:normal 24.00px/24.00px 'Liberation Sans', sans-serif;color:#333;letter-spacing:0.000px;transform:scaleX(0.8933);transform-origin:0 0;">Yes</span>
<span class="t r" style="left:1120.50px;top:622.00px;font:normal 24.00px/24.00px 'Liberation Sans', sans-serif;color:#333;letter-spacing:0.000px;transform:scaleX(0.9611);transform-origin:0 0;">0.5506424040555903</span>
<span class="t r" style="left:1416.50px;top:622.00px;font:normal 24.00px/24.00px 'Liberation Sans', sans-serif;color:#333;letter-spacing:0.000px;transform:scaleX(0.9611);transform-origin:0 0;">0.4493575959444097</span>
<span class="t r" style="left:1827.50px;top:622.00px;font:normal 24.00px/24.00px 'Liberation Sans', sans-serif;color:#333;letter-spacing:0.000px;transform:scaleX(0.9611);transform-origin:0 0;">1</span>
<span class="t r" style="left:1864.00px;top:622.00px;font:normal 24.00px/24.00px 'Liberation Sans', sans-serif;color:#333;letter-spacing:0.000px;transform:scaleX(1.0102);transform-origin:0 0;">{"Number of inpatient visits": -0.409727160135161…</span>
<span class="t r" style="left:137.00px;top:676.00px;font:normal 24.00px/24.00px 'Liberation Sans', sans-serif;color:#333;letter-spacing:0.000px;transform:scaleX(0.8676);transform-origin:0 0;">Ch</span>
<span class="t r" style="left:512.00px;top:676.00px;font:normal 24.00px/24.00px 'Liberation Sans', sans-serif;color:#333;letter-spacing:0.000px;transform:scaleX(0.8933);transform-origin:0 0;">Yes</span>
<span class="t r" style="left:1120.50px;top:676.00px;font:normal 24.00px/24.00px 'Liberation Sans', sans-serif;color:#333;letter-spacing:0.000px;transform:scaleX(0.9611);transform-origin:0 0;">0.5282480584615209</span>
<span class="t r" style="left:1416.50px;top:676.00px;font:normal 24.00px/24.00px 'Liberation Sans', sans-serif;color:#333;letter-spacing:0.000px;transform:scaleX(0.9611);transform-origin:0 0;">0.4717519415384791</span>
<span class="t r" style="left:1827.50px;top:676.00px;font:normal 24.00px/24.00px 'Liberation Sans', sans-serif;color:#333;letter-spacing:0.000px;transform:scaleX(0.9611);transform-origin:0 0;">1</span>
<span class="t r" style="left:1864.00px;top:676.00px;font:normal 24.00px/24.00px 'Liberation Sans', sans-serif;color:#333;letter-spacing:0.000px;transform:scaleX(1.0102);transform-origin:0 0;">{"Number of inpatient visits": -0.384099279807591…</span>
<span class="t r" style="left:137.00px;top:730.00px;font:normal 24.00px/24.00px 'Liberation Sans', sans-serif;color:#333;letter-spacing:0.000px;transform:scaleX(0.9785);transform-origin:0 0;">No</span>
<span class="t r" style="left:512.00px;top:730.00px;font:normal 24.00px/24.00px 'Liberation Sans', sans-serif;color:#333;letter-spacing:0.000px;transform:scaleX(0.8933);transform-origin:0 0;">Yes</span>
<span class="t r" style="left:1120.50px;top:730.00px;font:normal 24.00px/24.00px 'Liberation Sans', sans-serif;color:#333;letter-spacing:0.000px;transform:scaleX(0.9611);transform-origin:0 0;">0.4533777156420778</span>
<span class="t r" style="left:1416.50px;top:730.00px;font:normal 24.00px/24.00px 'Liberation Sans', sans-serif;color:#333;letter-spacing:0.000px;transform:scaleX(0.9611);transform-origin:0 0;">0.5466222843579223</span>
<span class="t r" style="left:1827.50px;top:730.00px;font:normal 24.00px/24.00px 'Liberation Sans', sans-serif;color:#333;letter-spacing:0.000px;transform:scaleX(0.9611);transform-origin:0 0;">1</span>
<span class="t r" style="left:1864.00px;top:730.00px;font:normal 24.00px/24.00px 'Liberation Sans', sans-serif;color:#333;letter-spacing:0.000px;transform:scaleX(1.0102);transform-origin:0 0;">{"Number of inpatient visits": -0.327290313988165…</span>
<span class="t r" style="left:137.00px;top:784.00px;font:normal 24.00px/24.00px 'Liberation Sans', sans-serif;color:#333;letter-spacing:0.000px;transform:scaleX(0.8676);transform-origin:0 0;">Ch</span>
<span class="t r" style="left:512.00px;top:784.00px;font:normal 24.00px/24.00px 'Liberation Sans', sans-serif;color:#333;letter-spacing:0.000px;transform:scaleX(0.8933);transform-origin:0 0;">Yes</span>
<span class="t r" style="left:1120.50px;top:784.00px;font:normal 24.00px/24.00px 'Liberation Sans', sans-serif;color:#333;letter-spacing:0.000px;transform:scaleX(0.9611);transform-origin:0 0;">0.5330587356485065</span>
<span class="t r" style="left:1416.50px;top:784.00px;font:normal 24.00px/24.00px 'Liberation Sans', sans-serif;color:#333;letter-spacing:0.000px;transform:scaleX(0.9611);transform-origin:0 0;">0.4669412643514936</span>
<span class="t r" style="left:1827.50px;top:784.00px;font:normal 24.00px/24.00px 'Liberation Sans', sans-serif;color:#333;letter-spacing:0.000px;transform:scaleX(0.9611);transform-origin:0 0;">1</span>
<span class="t r" style="left:1864.00px;top:784.00px;font:normal 24.00px/24.00px 'Liberation Sans', sans-serif;color:#333;letter-spacing:0.000px;transform:scaleX(1.0102);transform-origin:0 0;">{"Number of inpatient visits": -0.307706475037775…</span>
<span class="t r" style="left:137.00px;top:838.00px;font:normal 24.00px/24.00px 'Liberation Sans', sans-serif;color:#333;letter-spacing:0.000px;transform:scaleX(0.8676);transform-origin:0 0;">Ch</span>
<span class="t r" style="left:512.00px;top:838.00px;font:normal 24.00px/24.00px 'Liberation Sans', sans-serif;color:#333;letter-spacing:0.000px;transform:scaleX(0.8933);transform-origin:0 0;">Yes</span>
<span class="t r" style="left:1107.64px;top:838.00px;font:normal 24.00px/24.00px 'Liberation Sans', sans-serif;color:#333;letter-spacing:0.000px;transform:scaleX(0.9611);transform-origin:0 0;">0.37573275735741596</span>
<span class="t r" style="left:1429.30px;top:838.00px;font:normal 24.00px/24.00px 'Liberation Sans', sans-serif;color:#333;letter-spacing:0.000px;transform:scaleX(0.9611);transform-origin:0 0;">0.624267242642584</span>
<span class="t r" style="left:1827.50px;top:838.00px;font:normal 24.00px/24.00px 'Liberation Sans', sans-serif;color:#333;letter-spacing:0.000px;transform:scaleX(0.9611);transform-origin:0 0;">1</span>
<span class="t r" style="left:1864.00px;top:838.00px;font:normal 24.00px/24.00px 'Liberation Sans', sans-serif;color:#333;letter-spacing:0.000px;transform:scaleX(1.0102);transform-origin:0 0;">{"Number of inpatient visits": -0.210396527946376…</span>
<span class="t r" style="left:137.00px;top:892.00px;font:normal 24.00px/24.00px 'Liberation Sans', sans-serif;color:#333;letter-spacing:0.000px;transform:scaleX(0.8676);transform-origin:0 0;">Ch</span>
<span class="t r" style="left:512.00px;top:892.00px;font:normal 24.00px/24.00px 'Liberation Sans', sans-serif;color:#333;letter-spacing:0.000px;transform:scaleX(0.8933);transform-origin:0 0;">Yes</span>
<span class="t r" style="left:1120.50px;top:892.00px;font:normal 24.00px/24.00px 'Liberation Sans', sans-serif;color:#333;letter-spacing:0.000px;transform:scaleX(0.9611);transform-origin:0 0;">0.5099818082452283</span>
<span class="t r" style="left:1416.50px;top:892.00px;font:normal 24.00px/24.00px 'Liberation Sans', sans-serif;color:#333;letter-spacing:0.000px;transform:scaleX(0.9611);transform-origin:0 0;">0.4900181917547717</span>
<span class="t r" style="left:1827.50px;top:892.00px;font:normal 24.00px/24.00px 'Liberation Sans', sans-serif;color:#333;letter-spacing:0.000px;transform:scaleX(0.9611);transform-origin:0 0;">1</span>
<span class="t r" style="left:1864.00px;top:892.00px;font:normal 24.00px/24.00px 'Liberation Sans', sans-serif;color:#333;letter-spacing:0.000px;transform:scaleX(1.0102);transform-origin:0 0;">{"Number of inpatient visits": -0.457150095979896…</span>
<span class="t r" style="left:137.00px;top:946.00px;font:normal 24.00px/24.00px 'Liberation Sans', sans-serif;color:#333;letter-spacing:0.000px;transform:scaleX(0.8676);transform-origin:0 0;">Ch</span>
<span class="t r" style="left:512.00px;top:946.00px;font:normal 24.00px/24.00px 'Liberation Sans', sans-serif;color:#333;letter-spacing:0.000px;transform:scaleX(0.8933);transform-origin:0 0;">Yes</span>
<span class="t r" style="left:1120.50px;top:946.00px;font:normal 24.00px/24.00px 'Liberation Sans', sans-serif;color:#333;letter-spacing:0.000px;transform:scaleX(0.9611);transform-origin:0 0;">0.6213907194018552</span>
<span class="t r" style="left:1416.50px;top:946.00px;font:normal 24.00px/24.00px 'Liberation Sans', sans-serif;color:#333;letter-spacing:0.000px;transform:scaleX(0.9611);transform-origin:0 0;">0.3786092805981449</span>
<span class="t r" style="left:1827.50px;top:946.00px;font:normal 24.00px/24.00px 'Liberation Sans', sans-serif;color:#333;letter-spacing:0.000px;transform:scaleX(0.9611);transform-origin:0 0;">0</span>
<span class="t r" style="left:1864.00px;top:946.00px;font:normal 24.00px/24.00px 'Liberation Sans', sans-serif;color:#333;letter-spacing:0.000px;transform:scaleX(1.0102);transform-origin:0 0;">{"Number of inpatient visits": -0.327693368437559…</span>
<span class="t r" style="left:137.00px;top:1000.00px;font:normal 24.00px/24.00px 'Liberation Sans', sans-serif;color:#333;letter-spacing:0.000px;transform:scaleX(0.9785);transform-origin:0 0;">No</span>
<span class="t r" style="left:512.00px;top:1000.00px;font:normal 24.00px/24.00px 'Liberation Sans', sans-serif;color:#333;letter-spacing:0.000px;transform:scaleX(0.9785);transform-origin:0 0;">No</span>
<span class="t r" style="left:1122.23px;top:1000.00px;font:normal 24.00px/24.00px 'Liberation Sans', sans-serif;color:#333;letter-spacing:0.000px;transform:scaleX(0.9611);transform-origin:0 0;">0.6265509217612311</span>
<span class="t r" style="left:1416.50px;top:1000.00px;font:normal 24.00px/24.00px 'Liberation Sans', sans-serif;color:#333;letter-spacing:0.000px;transform:scaleX(0.9611);transform-origin:0 0;">0.3734490782387691</span>
<span class="t r" style="left:1827.50px;top:1000.00px;font:normal 24.00px/24.00px 'Liberation Sans', sans-serif;color:#333;letter-spacing:0.000px;transform:scaleX(0.9611);transform-origin:0 0;">0</span>
<span class="t r" style="left:1864.00px;top:1000.00px;font:normal 24.00px/24.00px 'Liberation Sans', sans-serif;color:#333;letter-spacing:0.000px;transform:scaleX(1.0102);transform-origin:0 0;">{"Number of inpatient visits": -0.499416196918337…</span>
<span class="t r" style="left:137.00px;top:1054.00px;font:normal 24.00px/24.00px 'Liberation Sans', sans-serif;color:#333;letter-spacing:0.000px;transform:scaleX(0.8676);transform-origin:0 0;">Ch</span>
<span class="t r" style="left:512.00px;top:1054.00px;font:normal 24.00px/24.00px 'Liberation Sans', sans-serif;color:#333;letter-spacing:0.000px;transform:scaleX(0.8933);transform-origin:0 0;">Yes</span>
<span class="t r" style="left:1122.23px;top:1054.00px;font:normal 24.00px/24.00px 'Liberation Sans', sans-serif;color:#333;letter-spacing:0.000px;transform:scaleX(0.9611);transform-origin:0 0;">0.5461194546850392</span>
<span class="t r" style="left:1416.50px;top:1054.00px;font:normal 24.00px/24.00px 'Liberation Sans', sans-serif;color:#333;letter-spacing:0.000px;transform:scaleX(0.9611);transform-origin:0 0;">0.4538805453149608</span>
<span class="t r" style="left:1827.50px;top:1054.00px;font:normal 24.00px/24.00px 'Liberation Sans', sans-serif;color:#333;letter-spacing:0.000px;transform:scaleX(0.9611);transform-origin:0 0;">1</span>
<span class="t r" style="left:1864.00px;top:1054.00px;font:normal 24.00px/24.00px 'Liberation Sans', sans-serif;color:#333;letter-spacing:0.000px;transform:scaleX(1.0102);transform-origin:0 0;">{"Number of inpatient visits": -0.330906199504227…</span>
<span class="t r" style="left:137.00px;top:1108.00px;font:normal 24.00px/24.00px 'Liberation Sans', sans-serif;color:#333;letter-spacing:0.000px;transform:scaleX(0.8676);transform-origin:0 0;">Ch</span>
<span class="t r" style="left:512.00px;top:1108.00px;font:normal 24.00px/24.00px 'Liberation Sans', sans-serif;color:#333;letter-spacing:0.000px;transform:scaleX(0.8933);transform-origin:0 0;">Yes</span>
<span class="t r" style="left:1120.50px;top:1108.00px;font:normal 24.00px/24.00px 'Liberation Sans', sans-serif;color:#333;letter-spacing:0.000px;transform:scaleX(0.9611);transform-origin:0 0;">0.4702450108664427</span>
<span class="t r" style="left:1416.50px;top:1108.00px;font:normal 24.00px/24.00px 'Liberation Sans', sans-serif;color:#333;letter-spacing:0.000px;transform:scaleX(0.9611);transform-origin:0 0;">0.5297549891335573</span>
<span class="t r" style="left:1827.50px;top:1108.00px;font:normal 24.00px/24.00px 'Liberation Sans', sans-serif;color:#333;letter-spacing:0.000px;transform:scaleX(0.9611);transform-origin:0 0;">1</span>
<span class="t r" style="left:1864.00px;top:1108.00px;font:normal 24.00px/24.00px 'Liberation Sans', sans-serif;color:#333;letter-spacing:0.000px;transform:scaleX(1.0102);transform-origin:0 0;">{"Number of inpatient visits": -0.108466868266149…</span>
<span class="t r" style="left:137.00px;top:1162.00px;font:normal 24.00px/24.00px 'Liberation Sans', sans-serif;color:#333;letter-spacing:0.000px;transform:scaleX(0.8676);transform-origin:0 0;">Ch</span>
<span class="t r" style="left:512.00px;top:1162.00px;font:normal 24.00px/24.00px 'Liberation Sans', sans-serif;color:#333;letter-spacing:0.000px;transform:scaleX(0.8933);transform-origin:0 0;">Yes</span>
<span class="t r" style="left:1107.64px;top:1162.00px;font:normal 24.00px/24.00px 'Liberation Sans', sans-serif;color:#333;letter-spacing:0.000px;transform:scaleX(0.9611);transform-origin:0 0;">0.48088304707960866</span>
<span class="t r" style="left:1418.23px;top:1162.00px;font:normal 24.00px/24.00px 'Liberation Sans', sans-serif;color:#333;letter-spacing:0.000px;transform:scaleX(0.9611);transform-origin:0 0;">0.5191169529203914</span>
<span class="t r" style="left:1827.50px;top:1162.00px;font:normal 24.00px/24.00px 'Liberation Sans', sans-serif;color:#333;letter-spacing:0.000px;transform:scaleX(0.9611);transform-origin:0 0;">1</span>
<span class="t r" style="left:1864.00px;top:1162.00px;font:normal 24.00px/24.00px 'Liberation Sans', sans-serif;color:#333;letter-spacing:0.000px;transform:scaleX(1.0102);transform-origin:0 0;">{"Number of inpatient visits": -0.296206606952665…</span>
<span class="t r" style="left:137.00px;top:1216.00px;font:normal 24.00px/24.00px 'Liberation Sans', sans-serif;color:#333;letter-spacing:0.000px;transform:scaleX(0.9785);transform-origin:0 0;">No</span>
<span class="t r" style="left:512.00px;top:1216.00px;font:normal 24.00px/24.00px 'Liberation Sans', sans-serif;color:#333;letter-spacing:0.000px;transform:scaleX(0.8933);transform-origin:0 0;">Yes</span>
<span class="t r" style="left:1120.50px;top:1216.00px;font:normal 24.00px/24.00px 'Liberation Sans', sans-serif;color:#333;letter-spacing:0.000px;transform:scaleX(0.9611);transform-origin:0 0;">0.5082781912164651</span>
<span class="t r" style="left:1429.30px;top:1216.00px;font:normal 24.00px/24.00px 'Liberation Sans', sans-serif;color:#333;letter-spacing:0.000px;transform:scaleX(0.9611);transform-origin:0 0;">0.491721808783535</span>
<span class="t r" style="left:1827.50px;top:1216.00px;font:normal 24.00px/24.00px 'Liberation Sans', sans-serif;color:#333;letter-spacing:0.000px;transform:scaleX(0.9611);transform-origin:0 0;">1</span>
<span class="t r" style="left:1864.00px;top:1216.00px;font:normal 24.00px/24.00px 'Liberation Sans', sans-serif;color:#333;letter-spacing:0.000px;transform:scaleX(1.0117);transform-origin:0 0;">{"Number of inpatient visits": -0.418955945354919,…</span>
<span class="t r" style="left:137.00px;top:1270.00px;font:normal 24.00px/24.00px 'Liberation Sans', sans-serif;color:#333;letter-spacing:0.000px;transform:scaleX(0.8676);transform-origin:0 0;">Ch</span>
<span class="t r" style="left:512.00px;top:1270.00px;font:normal 24.00px/24.00px 'Liberation Sans', sans-serif;color:#333;letter-spacing:0.000px;transform:scaleX(0.8933);transform-origin:0 0;">Yes</span>
<span class="t r" style="left:1107.64px;top:1270.00px;font:normal 24.00px/24.00px 'Liberation Sans', sans-serif;color:#333;letter-spacing:0.000px;transform:scaleX(0.9611);transform-origin:0 0;">0.44020089151808683</span>
<span class="t r" style="left:1416.50px;top:1270.00px;font:normal 24.00px/24.00px 'Liberation Sans', sans-serif;color:#333;letter-spacing:0.000px;transform:scaleX(0.9611);transform-origin:0 0;">0.5597991084819133</span>
<span class="t r" style="left:1827.50px;top:1270.00px;font:normal 24.00px/24.00px 'Liberation Sans', sans-serif;color:#333;letter-spacing:0.000px;transform:scaleX(0.9611);transform-origin:0 0;">1</span>
<span class="t r" style="left:1864.00px;top:1270.00px;font:normal 24.00px/24.00px 'Liberation Sans', sans-serif;color:#333;letter-spacing:0.000px;transform:scaleX(1.0075);transform-origin:0 0;">{"Patient number": 0.05933809438169485, "Numbe…</span>
<span class="t r" style="left:137.00px;top:1324.00px;font:normal 24.00px/24.00px 'Liberation Sans', sans-serif;color:#333;letter-spacing:0.000px;transform:scaleX(0.9785);transform-origin:0 0;">No</span>
<span class="t r" style="left:512.00px;top:1324.00px;font:normal 24.00px/24.00px 'Liberation Sans', sans-serif;color:#333;letter-spacing:0.000px;transform:scaleX(0.8933);transform-origin:0 0;">Yes</span>
<span class="t r" style="left:1120.50px;top:1324.00px;font:normal 24.00px/24.00px 'Liberation Sans', sans-serif;color:#333;letter-spacing:0.000px;transform:scaleX(0.9611);transform-origin:0 0;">0.6197553251716713</span>
<span class="t r" style="left:1416.50px;top:1324.00px;font:normal 24.00px/24.00px 'Liberation Sans', sans-serif;color:#333;letter-spacing:0.000px;transform:scaleX(0.9611);transform-origin:0 0;">0.3802446748283287</span>
<span class="t r" style="left:1827.50px;top:1324.00px;font:normal 24.00px/24.00px 'Liberation Sans', sans-serif;color:#333;letter-spacing:0.000px;transform:scaleX(0.9611);transform-origin:0 0;">0</span>
<span class="t r" style="left:1864.00px;top:1324.00px;font:normal 24.00px/24.00px 'Liberation Sans', sans-serif;color:#333;letter-spacing:0.000px;transform:scaleX(1.0167);transform-origin:0 0;">{"Number of inpatient visits": -0.409691113887138…</span>
<span class="t r" style="left:137.00px;top:1378.00px;font:normal 24.00px/24.00px 'Liberation Sans', sans-serif;color:#333;letter-spacing:0.000px;transform:scaleX(0.8676);transform-origin:0 0;">Ch</span>
<span class="t r" style="left:512.00px;top:1378.00px;font:normal 24.00px/24.00px 'Liberation Sans', sans-serif;color:#333;letter-spacing:0.000px;transform:scaleX(0.8933);transform-origin:0 0;">Yes</span>
<span class="t r" style="left:1107.64px;top:1378.00px;font:normal 24.00px/24.00px 'Liberation Sans', sans-serif;color:#333;letter-spacing:0.000px;transform:scaleX(0.9611);transform-origin:0 0;">0.32559521735221336</span>
<span class="t r" style="left:1416.50px;top:1378.00px;font:normal 24.00px/24.00px 'Liberation Sans', sans-serif;color:#333;letter-spacing:0.000px;transform:scaleX(0.9611);transform-origin:0 0;">0.6744047826477865</span>
<span class="t r" style="left:1827.50px;top:1378.00px;font:normal 24.00px/24.00px 'Liberation Sans', sans-serif;color:#333;letter-spacing:0.000px;transform:scaleX(0.9611);transform-origin:0 0;">1</span>
<span class="t r" style="left:1864.00px;top:1378.00px;font:normal 24.00px/24.00px 'Liberation Sans', sans-serif;color:#333;letter-spacing:0.000px;transform:scaleX(1.0104);transform-origin:0 0;">{"Number of inpatient visits": 0.1529996469147733…</span>
<span class="t r" style="left:137.00px;top:1432.00px;font:normal 24.00px/24.00px 'Liberation Sans', sans-serif;color:#333;letter-spacing:0.000px;transform:scaleX(0.9785);transform-origin:0 0;">No</span>
<span class="t r" style="left:512.00px;top:1432.00px;font:normal 24.00px/24.00px 'Liberation Sans', sans-serif;color:#333;letter-spacing:0.000px;transform:scaleX(0.9785);transform-origin:0 0;">No</span>
<span class="t r" style="left:1120.50px;top:1432.00px;font:normal 24.00px/24.00px 'Liberation Sans', sans-serif;color:#333;letter-spacing:0.000px;transform:scaleX(0.9611);transform-origin:0 0;">0.5873217468201537</span>
<span class="t r" style="left:1416.50px;top:1432.00px;font:normal 24.00px/24.00px 'Liberation Sans', sans-serif;color:#333;letter-spacing:0.000px;transform:scaleX(0.9611);transform-origin:0 0;">0.4126782531798463</span>
<span class="t r" style="left:1827.50px;top:1432.00px;font:normal 24.00px/24.00px 'Liberation Sans', sans-serif;color:#333;letter-spacing:0.000px;transform:scaleX(0.9611);transform-origin:0 0;">0</span>
<span class="t r" style="left:1864.00px;top:1432.00px;font:normal 24.00px/24.00px 'Liberation Sans', sans-serif;color:#333;letter-spacing:0.000px;transform:scaleX(1.0134);transform-origin:0 0;">{"Number of inpatient visits": -0.391127748902914…</span>
<span class="t" style="left:420.30px;top:112.00px;font:bold 20.00px/20.00px 'Liberation Sans', sans-serif;color:#fff;letter-spacing:0.000px;transform:scaleX(0.8467);transform-origin:0 0;">GD</span>
<span class="t" style="left:421.80px;top:129.00px;font:bold 20.00px/20.00px 'Liberation Sans', sans-serif;color:#fff;letter-spacing:0.000px;transform:scaleX(0.8489);transform-origin:0 0;">PR</span>
<div style="left:1053px;top:381px;width:1393px;height:1040px;border:10px solid #ff2300"></div>
</div></body></html>
